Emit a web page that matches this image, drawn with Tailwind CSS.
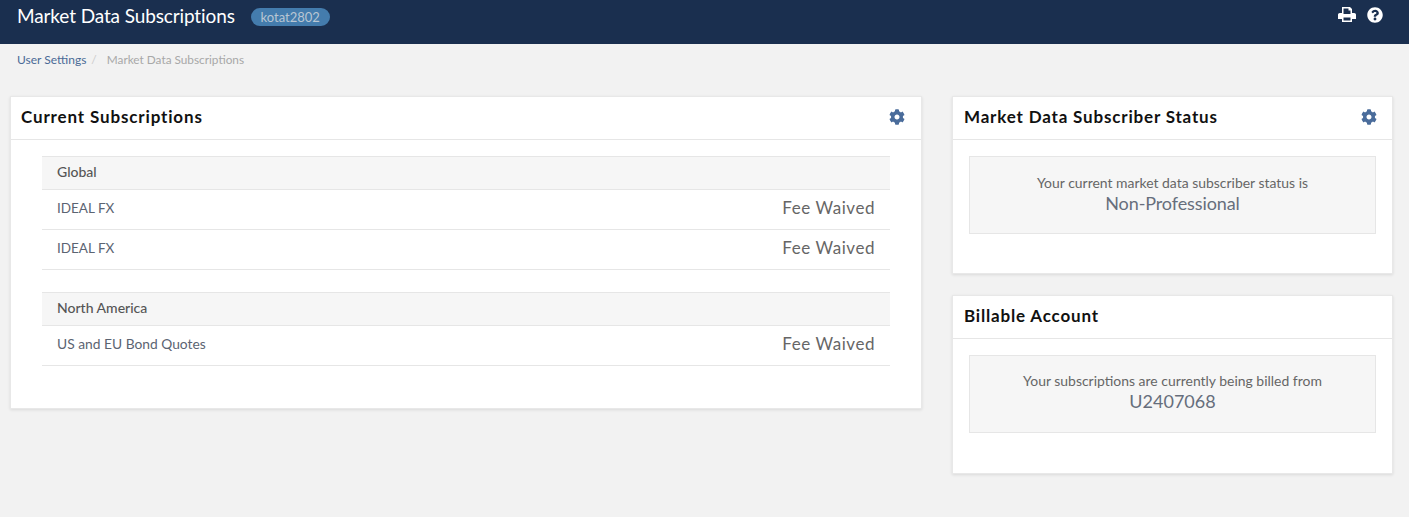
<!DOCTYPE html>
<html lang="en">
<head>
  <meta charset="UTF-8" />
  <title>Market Data Subscriptions</title>
  <script src="https://cdn.jsdelivr.net/npm/@tailwindcss/browser@4"></script>
</head>
<body class="bg-[#f2f2f2] h-[517px] overflow-hidden font-['Lato','Liberation_Sans',sans-serif] text-[13px] text-[#555]">

  <header class="h-[44px] bg-[#1a2f4f] flex items-start justify-between pl-[17px] pr-[26px]">
    <div class="flex items-center h-[33px]">
      <h1 class="text-[19px] text-white tracking-[-0.12px]">Market Data Subscriptions</h1>
      <span class="ml-[16px] h-[18px] w-[79px] rounded-full bg-[#447cad] text-[#b9c6d3] text-[13px] leading-[18px] text-center">kotat2802</span>
    </div>
    <div class="flex items-center gap-[11px] h-[30px]">
      <svg class="w-[18px] h-[15px] mb-[1px]" viewBox="0 0 18 15" fill="#fff"><path fill-rule="evenodd" d="M4 0h8l2 2v4h2.2c1 0 1.8.8 1.8 1.8V12h-4v3H4v-3H0V7.800C0 6.800.8 6 1.800 6H4V0zm1.500 1.500V7h7V3.500h-2v-2h-5zM5.500 10.500v3h7v-3h-7z"/></svg>
      <svg class="w-[16px] h-[16px]" viewBox="0 0 512 512" fill="#fff"><path d="M504 256c0 136.997-111.043 248-248 248S8 392.997 8 256C8 119.083 119.043 8 256 8s248 111.083 248 248zM262.655 90c-54.497 0-89.255 22.957-116.549 63.758-3.536 5.286-2.353 12.415 2.715 16.258l34.699 26.31c5.205 3.947 12.621 3.008 16.665-2.122 17.864-22.658 30.113-35.797 57.303-35.797 20.429 0 45.698 13.148 45.698 32.958 0 14.976-12.363 22.667-32.534 33.976C247.128 238.528 216 254.941 216 296v4c0 6.627 5.373 12 12 12h56c6.627 0 12-5.373 12-12v-1.333c0-28.462 83.186-29.647 83.186-106.667 0-58.002-60.165-102-116.531-102zM256 338c-25.365 0-46 20.635-46 46 0 25.364 20.635 46 46 46s46-20.636 46-46c0-25.365-20.635-46-46-46z"/></svg>
    </div>
  </header>

  <nav class="h-[52px] pl-[17px] pt-[8px] text-[12px] leading-[15px] flex">
    <a class="text-[#4a6a96]">User Settings</a>
    <span class="text-[#ccc] ml-[5px]">/</span>
    <span class="text-[#a8a8a8] ml-[10px] text-[11.8px]">Market Data Subscriptions</span>
  </nav>

  <main class="flex items-start gap-[30px] pl-[10px] pr-[16px]">
    <section class="w-[912px] h-[313px] bg-white border border-[#e8e8e8] shadow-[0_1px_3px_rgba(0,0,0,0.1)]">
      <div class="h-[43px] pb-[2px] border-b border-[#e6e6e6] flex items-center justify-between pl-[10px] pr-[16px]">
        <h2 class="text-[17px] font-bold text-[#111] tracking-[0.85px]">Current Subscriptions</h2>
        <svg class="w-[16px] h-[16px]" viewBox="0 0 512 512" fill="#4a6c9b"><path d="M487.4 315.7l-42.6-24.6c4.3-23.2 4.3-47 0-70.2l42.6-24.6c4.9-2.8 7.1-8.6 5.5-14-11.1-35.6-30-67.8-54.7-94.6-3.8-4.1-10-5.1-14.8-2.3L380.8 110c-17.9-15.4-38.5-27.3-60.8-35.1V25.8c0-5.6-3.9-10.5-9.4-11.7-36.7-8.2-74.3-7.8-109.2 0-5.5 1.2-9.4 6.1-9.4 11.7V75c-22.2 7.9-42.8 19.8-60.8 35.1L88.7 85.5c-4.9-2.8-11-1.9-14.8 2.3-24.7 26.7-43.6 58.9-54.7 94.6-1.7 5.4.6 11.2 5.5 14L67.3 221c-4.3 23.2-4.3 47 0 70.2l-42.6 24.6c-4.9 2.8-7.1 8.6-5.5 14 11.1 35.6 30 67.8 54.7 94.6 3.8 4.1 10 5.1 14.8 2.3l42.6-24.6c17.9 15.4 38.5 27.3 60.8 35.1v49.2c0 5.6 3.9 10.5 9.4 11.7 36.7 8.2 74.3 7.8 109.2 0 5.5-1.2 9.4-6.1 9.4-11.7v-49.2c22.2-7.9 42.8-19.8 60.8-35.1l42.6 24.6c4.9 2.8 11 1.9 14.8-2.3 24.7-26.7 43.6-58.9 54.7-94.6 1.5-5.5-.7-11.3-5.6-14.1zM256 336c-44.1 0-80-35.9-80-80s35.9-80 80-80 80 35.9 80 80-35.9 80-80 80z"/></svg>
      </div>
      <div class="pt-[16px] px-[31px]">
        <div class="h-[34px] pb-[3px] bg-[#f6f6f6] border-y border-[#e6e6e6] pl-[15px] flex items-center text-[14px] font-medium text-[#555]">Global</div>
        <div class="h-[40px] pb-[2px] border-b border-[#e6e6e6] flex items-center justify-between px-[15px]">
          <span class="text-[13.5px] text-[#5b6472]">IDEAL FX</span>
          <span class="text-[17px] mb-[2px] text-[#666] tracking-[0.55px]">Fee Waived</span>
        </div>
        <div class="h-[40px] pb-[2px] border-b border-[#e6e6e6] flex items-center justify-between px-[15px]">
          <span class="text-[13.5px] text-[#5b6472]">IDEAL FX</span>
          <span class="text-[17px] mb-[2px] text-[#666] tracking-[0.55px]">Fee Waived</span>
        </div>
        <div class="mt-[22px] h-[34px] pb-[3px] bg-[#f6f6f6] border-y border-[#e6e6e6] pl-[15px] flex items-center text-[14px] font-medium text-[#555]">North America</div>
        <div class="h-[40px] pb-[2px] border-b border-[#e6e6e6] flex items-center justify-between px-[15px]">
          <span class="text-[13.8px] text-[#5b6472]">US and EU Bond Quotes</span>
          <span class="text-[17px] mb-[2px] text-[#666] tracking-[0.55px]">Fee Waived</span>
        </div>
      </div>
    </section>

    <div class="w-[441px] flex flex-col gap-[21px]">
      <section class="h-[178px] bg-white border border-[#e8e8e8] shadow-[0_1px_3px_rgba(0,0,0,0.1)]">
        <div class="h-[43px] pb-[2px] border-b border-[#e6e6e6] flex items-center justify-between pl-[11px] pr-[15px]">
          <h2 class="text-[17px] font-bold text-[#111] tracking-[0.82px]">Market Data Subscriber Status</h2>
          <svg class="w-[16px] h-[16px]" viewBox="0 0 512 512" fill="#4a6c9b"><path d="M487.4 315.7l-42.6-24.6c4.3-23.2 4.3-47 0-70.2l42.6-24.6c4.9-2.8 7.1-8.6 5.5-14-11.1-35.6-30-67.8-54.7-94.6-3.8-4.1-10-5.1-14.8-2.3L380.8 110c-17.9-15.4-38.5-27.3-60.8-35.1V25.8c0-5.6-3.9-10.5-9.4-11.7-36.7-8.2-74.3-7.8-109.2 0-5.5 1.2-9.4 6.1-9.4 11.7V75c-22.2 7.9-42.8 19.8-60.8 35.1L88.7 85.5c-4.9-2.8-11-1.9-14.8 2.3-24.7 26.7-43.6 58.9-54.7 94.6-1.7 5.4.6 11.2 5.5 14L67.3 221c-4.3 23.2-4.3 47 0 70.2l-42.6 24.6c-4.9 2.8-7.1 8.6-5.5 14 11.1 35.6 30 67.8 54.7 94.6 3.8 4.1 10 5.1 14.8 2.3l42.6-24.6c17.9 15.4 38.5 27.3 60.8 35.1v49.2c0 5.6 3.9 10.5 9.4 11.7 36.7 8.2 74.3 7.8 109.2 0 5.5-1.2 9.4-6.1 9.4-11.7v-49.2c22.2-7.9 42.8-19.8 60.8-35.1l42.6 24.6c4.9 2.8 11 1.9 14.8-2.3 24.7-26.7 43.6-58.9 54.7-94.6 1.5-5.5-.7-11.3-5.6-14.1zM256 336c-44.1 0-80-35.9-80-80s35.9-80 80-80 80 35.9 80 80-35.9 80-80 80z"/></svg>
        </div>
        <div class="pt-[16px] px-[16px]">
          <div class="h-[78px] bg-[#f6f6f6] border border-[#e6e6e6] flex flex-col items-center pt-[17px]">
            <p class="text-[13.95px] leading-[17px] text-[#666]">Your current market data subscriber status is</p>
            <p class="text-[18px] leading-[24px] text-[#666e7c] tracking-[-0.1px]">Non-Professional</p>
          </div>
        </div>
      </section>

      <section class="h-[179px] bg-white border border-[#e8e8e8] shadow-[0_1px_3px_rgba(0,0,0,0.1)]">
        <div class="h-[43px] pb-[2px] border-b border-[#e6e6e6] flex items-center pl-[11px]">
          <h2 class="text-[17px] font-bold text-[#111] tracking-[0.82px]">Billable Account</h2>
        </div>
        <div class="pt-[16px] px-[16px]">
          <div class="h-[78px] bg-[#f6f6f6] border border-[#e6e6e6] flex flex-col items-center pt-[16px]">
            <p class="text-[13.95px] leading-[17px] text-[#666]">Your subscriptions are currently being billed from</p>
            <p class="text-[18px] leading-[24px] text-[#666e7c]">U2407068</p>
          </div>
        </div>
      </section>
    </div>
  </main>

</body>
</html>
